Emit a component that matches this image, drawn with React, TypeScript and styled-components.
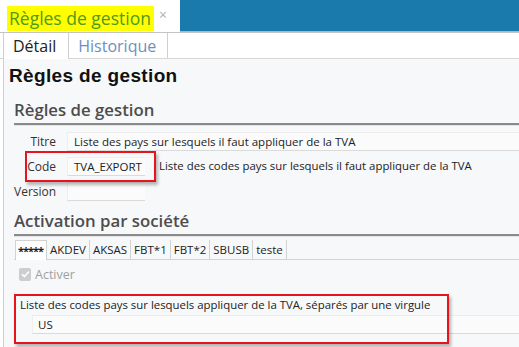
import React from "react";
import styled, { createGlobalStyle } from "styled-components";

const Global = createGlobalStyle`
  html, body { margin: 0; padding: 0; background: #ffffff; overflow: hidden; }
  * { box-sizing: border-box; }
`;

const UI = `"Open Sans", "Noto Sans", "Liberation Sans", sans-serif`;

const Page = styled.div`
  position: relative;
  width: 519px;
  height: 347px;
  overflow: hidden;
  display: flex;
  flex-direction: column;
  font-family: ${UI};
  background: #ffffff;
`;

const TopBar = styled.div`
  display: flex;
  height: 33px;
  flex-shrink: 0;
`;

const DocTab = styled.div`
  width: 180px;
  display: flex;
  align-items: flex-start;
  padding: 6px 0 0 7px;
  gap: 5px;
  background: #ffffff;
  border-bottom: 1px solid #c4c4c4;
`;

const Marker = styled.span`
  background: #ffff00;
  color: #4f9a1c;
  font-size: 17.5px;
  line-height: 25px;
  height: 25px;
  padding: 0 3px 0 2px;
  white-space: nowrap;
`;

const Close = styled.span`
  color: #b0b0b0;
  font-size: 14px;
  line-height: 16px;
  margin-top: 1px;
`;

const BlueFill = styled.div`
  flex: 1;
  background: #1a7aab;
  border-bottom: 1px solid #c4c4c4;
  box-shadow: inset 0 -1px 0 #8cc3df;
`;

const TabStrip = styled.div`
  display: flex;
  height: 26px;
  flex-shrink: 0;
  padding-left: 3px;
  border-bottom: 1px solid #d6d6d6;
  background: #ffffff;
`;

const MainTab = styled.div<{ $active?: boolean }>`
  display: flex;
  align-items: center;
  padding: 0 ${(p) => (p.$active ? "12px 0 9px" : "11px 0 9px")};
  font-size: 16px;
  color: ${(p) => (p.$active ? "#222222" : "#6f8ebd")};
  border-left: ${(p) => (p.$active ? "1px solid #cfcfcf" : "none")};
  border-right: 1px solid #cfcfcf;
  margin-bottom: ${(p) => (p.$active ? "-1px" : "0")};
  background: #ffffff;
`;

const Body = styled.div`
  flex: 1;
  margin-left: 3px;
  border-left: 1px solid #cfcfcf;
  background: #f7f8fa;
  display: flex;
  flex-direction: column;
`;

const PageTitle = styled.h1`
  margin: 0;
  padding: 6px 0 0 5px;
  height: 38px;
  font-family: "Liberation Sans", Arial, sans-serif;
  font-weight: bold;
  font-size: 19px;
  letter-spacing: 0.35px;
  line-height: 22px;
  color: #111111;
`;

const Section = styled.section<{ $gap?: number }>`
  display: flex;
  flex-direction: column;
  padding-left: 10px;
  margin-top: ${(p) => p.$gap ?? 0}px;
`;

const SectionHead = styled.h2`
  margin: 0;
  height: 28px;
  font-family: ${UI};
  font-weight: 600;
  font-size: 16.8px;
  line-height: 26px;
  color: #4d4d4d;
  border-bottom: 2px solid #8a8a8a;
  box-shadow: 0 1px 0 #e4e4e4;
`;

const FieldGrid = styled.div`
  display: grid;
  grid-template-columns: 42px 1fr;
  column-gap: 11px;
  row-gap: 6px;
  padding-top: 7px;
  align-items: center;
`;

const Label = styled.div`
  font-size: 12px;
  color: #333333;
  text-align: right;
  white-space: nowrap;
`;

const Line = styled.div`
  display: flex;
  align-items: center;
  gap: 14px;
  white-space: nowrap;
`;

const Input = styled.div<{ $w?: number }>`
  height: 19px;
  width: ${(p) => (p.$w ? `${p.$w}px` : "auto")};
  flex: ${(p) => (p.$w ? "none" : "1")};
  background: #fbfbfc;
  border-top: 1px solid #ececec;
  border-bottom: 1px solid #dadada;
  border-left: 1px solid #efefef;
  padding: 0 6px;
  font-size: 11.5px;
  line-height: 17px;
  color: #222222;
  white-space: nowrap;
  overflow: hidden;
`;

const Note = styled.span`
  font-size: 11.4px;
  color: #222222;
  margin-top: -3px;
`;

const CompanyTabs = styled.div`
  display: flex;
  height: 20px;
  margin-top: 4px;
  border-bottom: 1px solid #d2d2d2;
  padding-left: 1px;
`;

const CoTab = styled.div<{ $active?: boolean }>`
  display: flex;
  align-items: center;
  padding: 0 ${(p) => (p.$active ? "3px 0 2px" : "3px")};
  font-size: ${(p) => (p.$active ? "11px" : "11.5px")};
  font-weight: ${(p) => (p.$active ? 700 : 400)};
  letter-spacing: ${(p) => (p.$active ? "-1px" : "0")};
  color: #222222;
  background: ${(p) => (p.$active ? "#ffffff" : "transparent")};
  border-right: 1px solid #d2d2d2;
  border-left: ${(p) => (p.$active ? "1px solid #d2d2d2" : "none")};
  border-top: ${(p) => (p.$active ? "1px solid #d2d2d2" : "none")};
  margin-bottom: ${(p) => (p.$active ? "-1px" : "0")};
`;

const CheckRow = styled.label`
  display: flex;
  align-items: center;
  gap: 4px;
  margin: 7px 0 0 5px;
  height: 14px;
  font-size: 12.5px;
  color: #a0a0a0;
`;

const Box = styled.span`
  width: 12px;
  height: 13px;
  border-radius: 2px;
  background: #cdcdcd;
  display: flex;
  align-items: center;
  justify-content: center;
`;

const ListBlock = styled.div`
  display: flex;
  flex-direction: column;
  margin-top: 16px;
  padding-left: 6px;
`;

const ListLabel = styled.div`
  font-size: 11.4px;
  color: #222222;
  line-height: 16px;
  white-space: nowrap;
`;

const ListInput = styled(Input)`
  margin: 2px 0 0 12px;
  height: 19px;
  line-height: 17px;
  padding-left: 5px;
`;

const Annotation = styled.div`
  position: absolute;
  border: 2px solid #e8141b;
  box-shadow: 2px 3px 3px rgba(0, 0, 0, 0.28);
  pointer-events: none;
`;

export default function App() {
  return (
    <Page>
      <Global />
      <TopBar>
        <DocTab>
          <Marker>Règles de gestion</Marker>
          <Close>×</Close>
        </DocTab>
        <BlueFill />
      </TopBar>
      <TabStrip>
        <MainTab $active>Détail</MainTab>
        <MainTab>Historique</MainTab>
      </TabStrip>
      <Body>
        <PageTitle>Règles de gestion</PageTitle>
        <Section>
          <SectionHead>Règles de gestion</SectionHead>
          <FieldGrid>
            <Label>Titre</Label>
            <Line>
              <Input>Liste des pays sur lesquels il faut appliquer de la TVA</Input>
            </Line>
            <Label>Code</Label>
            <Line>
              <Input $w={78}>TVA_EXPORT</Input>
              <Note>Liste des codes pays sur lesquels il faut appliquer de la TVA</Note>
            </Line>
            <Label>Version</Label>
            <Line>
              <Input $w={78} />
            </Line>
          </FieldGrid>
        </Section>
        <Section $gap={7}>
          <SectionHead>Activation par société</SectionHead>
          <CompanyTabs>
            <CoTab $active>*****</CoTab>
            <CoTab>AKDEV</CoTab>
            <CoTab>AKSAS</CoTab>
            <CoTab>FBT*1</CoTab>
            <CoTab>FBT*2</CoTab>
            <CoTab>SBUSB</CoTab>
            <CoTab>teste</CoTab>
          </CompanyTabs>
          <CheckRow>
            <Box>
              <svg width="9" height="8" viewBox="0 0 9 8">
                <path d="M1 4.2 L3.4 6.5 L8 1.5" fill="none" stroke="#ffffff" strokeWidth="1.6" />
              </svg>
            </Box>
            Activer
          </CheckRow>
          <ListBlock>
            <ListLabel>Liste des codes pays sur lesquels appliquer de la TVA, séparés par une virgule</ListLabel>
            <ListInput>US</ListInput>
          </ListBlock>
        </Section>
      </Body>
      <Annotation style={{ left: 25, top: 151, width: 131, height: 31 }} />
      <Annotation style={{ left: 14, top: 294, width: 435, height: 50 }} />
    </Page>
  );
}
